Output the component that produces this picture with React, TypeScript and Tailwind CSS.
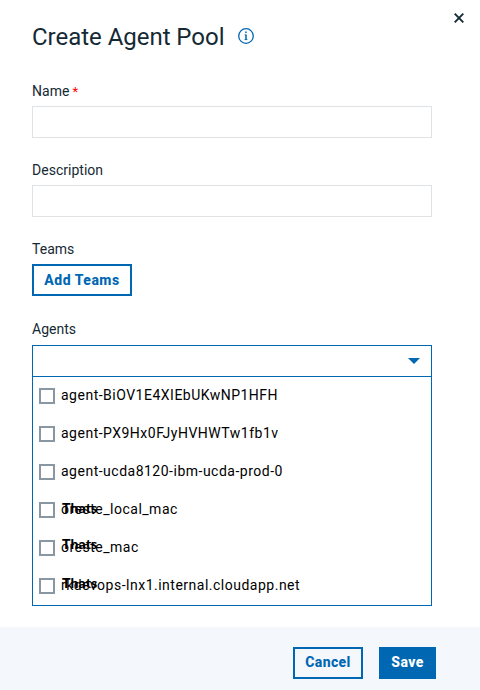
import React from "react";

const agents = [
  { name: "agent-BiOV1E4XIEbUKwNP1HFH" },
  { name: "agent-PX9Hx0FJyHVHWTw1fb1v" },
  { name: "agent-ucda8120-ibm-ucda-prod-0" },
  { name: "oreste_local_mac", mark: "-top-px" },
  { name: "oreste_mac", mark: "-top-[3px]" },
  { name: "rkdevops-lnx1.internal.cloudapp.net", mark: "-top-[2px]" },
];

function Label({ children }: { children: React.ReactNode }) {
  return <label className="block h-5 text-sm leading-5 tracking-[0.02px]">{children}</label>;
}

export default function App() {
  return (
    <div className="relative flex h-[690px] w-[480px] flex-col bg-white font-['Roboto',sans-serif] text-[#152935]">
      <button aria-label="Close" className="absolute left-[454px] top-[13px]">
        <svg width="10" height="10" viewBox="0 0 10 10" fill="none" stroke="currentColor" strokeWidth="1.9">
          <path d="M.7.7 9.3 9.3M9.3.7.7 9.3" />
        </svg>
      </button>
      <main className="flex h-[627px] flex-col px-8 pr-12 pt-[21px]">
        <header className="flex h-8 items-center">
          <h1 className="w-[192px] text-2xl leading-8 tracking-[-0.03px] whitespace-nowrap">Create Agent Pool</h1>
          <svg className="mb-[2px] ml-[14px]" width="16" height="16" viewBox="0 0 16 16" fill="none" stroke="#0067b3">
            <circle cx="8" cy="8" r="7.3" strokeWidth="1.3" />
            <path d="M8 6.5v5.5" strokeWidth="1.5" />
            <path d="M6.5 6.9H8M6.5 11.6h3" strokeWidth="0.8" />
            <path d="M7.2 4.3h1.5" strokeWidth="1.5" />
          </svg>
        </header>
        <div className="mt-[28px]">
          <Label>Name<span className="ml-[3px] text-[13px] text-[#ff0000]">*</span></Label>
          <input className="mt-[5px] block h-8 w-full border border-[#dfe3e6]" />
        </div>
        <div className="mt-[22px]">
          <Label>Description</Label>
          <input className="mt-[5px] block h-8 w-full border border-[#dfe3e6]" />
        </div>
        <div className="mt-[22px]">
          <Label>Teams</Label>
          <button className="mt-[5px] flex h-8 w-[100px] items-center justify-center border-2 border-[#0067b3] text-sm font-extrabold tracking-[0.5px] text-[#0067b3]">
            Add Teams
          </button>
        </div>
        <div className="mt-[23px]">
          <Label>Agents</Label>
          <div className="mt-[6px] h-[261px] border border-[#0067b3]">
            <div className="flex h-[31px] items-center justify-end border-b border-[#0067b3] pr-[11px]">
              <svg width="12" height="6" viewBox="0 0 12 6" fill="#0067b3"><path d="M0 0h12L6 6z" /></svg>
            </div>
            <ul className="-mt-px">
              {agents.map((a) => (
                <li key={a.name} className="flex h-[38px] items-center pl-[6px]">
                  <span className="mt-px h-4 w-4 shrink-0 border-2 border-[#8897a2]" />
                  <span className="relative ml-[6px] text-sm leading-5 tracking-[0.5px] text-black">
                    {a.name}
                    {a.mark && (
                      <span className={"absolute left-px font-['Lato',sans-serif] text-sm leading-5 font-black tracking-[0.1px] " + a.mark}>
                        Thats
                      </span>
                    )}
                  </span>
                </li>
              ))}
            </ul>
          </div>
        </div>
      </main>
      <footer className="flex h-[63px] items-start justify-end gap-4 bg-[#f4f7fb] pr-11 pt-5">
        <button className="h-8 w-[70px] border-2 border-[#0067b3] pb-[2px] text-sm font-extrabold tracking-[0.4px] text-[#0067b3]">Cancel</button>
        <button className="h-8 w-[57px] bg-[#0067b3] pb-[2px] text-sm font-extrabold tracking-[0.4px] text-white">Save</button>
      </footer>
    </div>
  );
}
